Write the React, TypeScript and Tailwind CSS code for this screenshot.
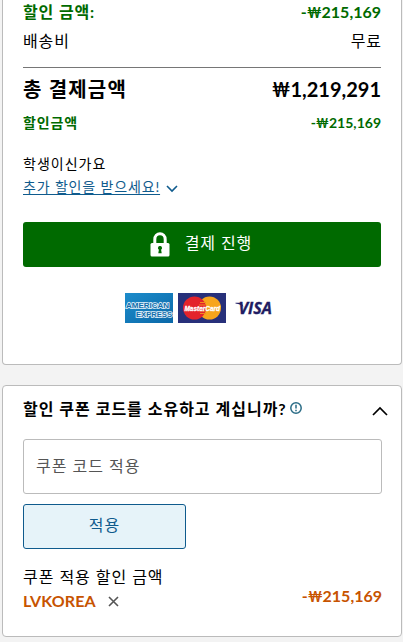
import React, { useState } from 'react';

function LockIcon() {
  return (
    <svg width="20" height="25" viewBox="0 0 20 25" className="shrink-0">
      <path d="M4.8 12V7.400a5.200 5.700 0 0 1 10.400 0V12" fill="none" stroke="#fff" strokeWidth="3" />
      <rect x="0.5" y="11" width="19" height="13.500" rx="1.500" fill="#fff" />
      <path d="M10 14.100a2 2 0 0 1 1.100 3.700l.6 3.400H8.300l.6-3.400A2 2 0 0 1 10 14.100z" fill="#006a00" />
    </svg>
  );
}

function AmexLogo() {
  return (
    <svg width="48" height="30" viewBox="0 0 48 30">
      <defs>
        <linearGradient id="amex" x1="0" y1="0" x2="1" y2="1">
          <stop offset="0" stopColor="#1c8ccb" />
          <stop offset="1" stopColor="#0a68a8" />
        </linearGradient>
      </defs>
      <rect width="48" height="30" fill="url(#amex)" />
      <g fontFamily="Liberation Sans" fontWeight="700" fill="#0f6dab" stroke="#e3f1fa" strokeWidth="1.6" paintOrder="stroke">
        <text x="1" y="14.5" fontSize="8" textLength="43" lengthAdjust="spacingAndGlyphs">AMERICAN</text>
        <text x="11" y="23.5" fontSize="7.5" textLength="36" lengthAdjust="spacingAndGlyphs">EXPRESS</text>
      </g>
    </svg>
  );
}

function MastercardLogo() {
  return (
    <svg width="48" height="30" viewBox="0 0 48 30">
      <rect width="48" height="30" fill="#27307a" />
      <circle cx="31.5" cy="15" r="11.5" fill="#f7a51c" />
      <circle cx="16.5" cy="15" r="11.5" fill="#e3232b" />
      <path d="M22 9.500h6M21 12h6M21 18h6M22 20.500h6" stroke="#f08a1f" strokeWidth="1" />
      <text x="6.5" y="18" textLength="35.5" lengthAdjust="spacingAndGlyphs" fontFamily="Liberation Sans" fontWeight="700" fontStyle="italic" fontSize="7" fill="#fff" stroke="#fff" strokeWidth="0.3">MasterCard</text>
    </svg>
  );
}

function VisaLogo() {
  return (
    <svg width="48" height="30" viewBox="0 0 48 30">
      <text x="7.5" y="21.3" textLength="33.5" lengthAdjust="spacingAndGlyphs" fontFamily="Open Sans" fontWeight="700" fontStyle="italic" fontSize="16" fill="#211c62" stroke="#211c62" strokeWidth="0.3">VISA</text>
      <path d="M4.500 9.800h6l2 4.500c-1.800-2.300-4-3.600-8-3.900z" fill="#211c62" />
    </svg>
  );
}

function Amount({ value, sign = '' }: { value: string; sign?: string }) {
  return (
    <span>
      {sign}
      <span className="-mr-[0.15em] inline-block origin-left scale-x-[0.84]">₩</span>
      {value}
    </span>
  );
}

function App() {
  const [open, setOpen] = useState(true);
  const [code, setCode] = useState('');

  return (
    <div className="h-[642px] overflow-hidden bg-[#f3f3f3] pl-[2px] pr-px font-['Lato','Noto_Sans_CJK_KR',sans-serif] text-base text-black">
      <section className="h-[365px] rounded-b border border-t-0 border-[#bbb] bg-white px-5">
        <div className="flex h-6 items-center justify-between font-bold text-[#006a00]">
          <span className="tracking-[0.85px]">할인 금액:</span>
          <Amount sign="-" value="215,169" />
        </div>
        <div className="mt-px flex h-[31px] items-center justify-between">
          <span className="tracking-[0.9px]">배송비</span>
          <span className="-mr-px tracking-[0.9px]">무료</span>
        </div>
        <div className="mt-[11px] flex h-[45px] items-center justify-between border-t border-[#767676] pb-[3px] text-xl font-bold">
          <span className="tracking-[1.2px]">총 결제금액</span>
          <Amount value="1,219,291" />
        </div>
        <div className="mt-px flex h-5 items-center justify-between text-sm font-bold text-[#006a00]">
          <span className="tracking-[0.9px]">할인금액</span>
          <Amount sign="-" value="215,169" />
        </div>

        <div className="mt-[19px] text-sm">
          <p className="h-[23px] leading-[23px] tracking-[1px]">학생이신가요</p>
          <a href="#student" className="flex h-6 items-center text-[#0f5b8d]">
            <span className="tracking-[0.85px] underline underline-offset-2">추가 할인을 받으세요!</span>
            <svg width="12" height="8" viewBox="0 0 12 8" className="ml-[6px] mt-1">
              <path d="M1 1l5 5 5-5" fill="none" stroke="currentColor" strokeWidth="1.6" />
            </svg>
          </a>
        </div>

        <button className="mt-[23px] flex h-[45px] w-full items-center justify-center gap-[15px] rounded-[3px] bg-[#006a00] pr-[2px] text-white">
          <LockIcon />
          <span className="-mt-[3px] tracking-[0.9px]">결제 진행</span>
        </button>

        <div className="mt-[26px] flex justify-center gap-[5px]">
          <AmexLogo />
          <MastercardLogo />
          <VisaLogo />
        </div>
      </section>

      <section className="mt-5 h-[252px] rounded border border-[#bbb] bg-white px-5">
        <button className="flex h-[53px] w-full items-center justify-between pb-[7px] text-left" onClick={() => setOpen(!open)}>
          <span className="flex items-center font-bold tracking-[1px]">
            할인 쿠폰 코드를 소유하고 계십니까?
            <svg width="12" height="12" viewBox="0 0 12 12" className="-mt-[3px] ml-[3px]">
              <circle cx="6" cy="6" r="5.2" fill="none" stroke="#2a6c86" strokeWidth="1.5" />
              <path d="M6 2.800v3.800M6 7.700v1.500" stroke="#2a6c86" strokeWidth="1.5" />
            </svg>
          </span>
          <svg width="16" height="10" viewBox="0 0 16 10" className="-mr-[7px] mt-[3px]">
            <path d="M1 9l7-7 7 7" fill="none" stroke="#000" strokeWidth="1.7" />
          </svg>
        </button>

        {open && (
          <div>
            <input
              value={code}
              onChange={(e) => setCode(e.target.value)}
              placeholder="쿠폰 코드 적용"
              className="block h-[55px] w-[359px] rounded-[3px] border border-[#bbb] px-3 pb-[2px] tracking-[1px] placeholder:text-[#555]"
            />
            <button className="mt-[10px] block h-[45px] w-[163px] rounded-[3px] border border-[#0f5b8d] bg-[#e6f3f9] pb-1 tracking-[1px] text-[#0f5b8d]">적용</button>
            <p className="mt-4 h-6 leading-6 tracking-[0.95px]">쿠폰 적용 할인 금액</p>
            <div className="-mr-px flex h-6 items-center justify-between font-bold text-[#c75300]">
              <span className="flex items-center">
                <span className="tracking-[0.1px]">LVKOREA</span>
                <svg width="11" height="11" viewBox="0 0 11 11" className="ml-3">
                  <path d="M1 1l9 9M10 1l-9 9" stroke="#555" strokeWidth="1.6" />
                </svg>
              </span>
              <span className="-mt-[11px]"><Amount sign="-" value="215,169" /></span>
            </div>
          </div>
        )}
      </section>
    </div>
  );
}

export default App;
